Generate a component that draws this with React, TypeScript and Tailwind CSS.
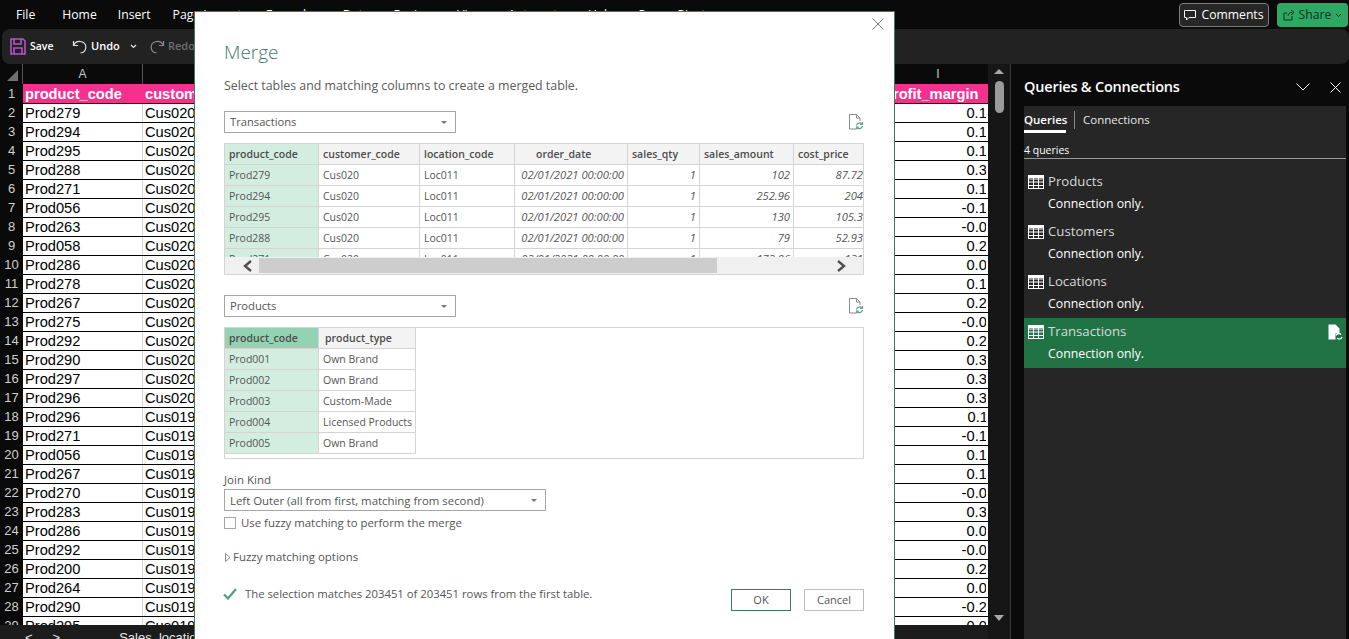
const sheetRows = [
  ["Prod279", "Cus020", "0.14"], ["Prod294", "Cus020", "0.19"], ["Prod295", "Cus020", "0.19"], ["Prod288", "Cus020", "0.33"],
  ["Prod271", "Cus020", "0.19"], ["Prod056", "Cus020", "-0.19"], ["Prod263", "Cus020", "-0.03"], ["Prod058", "Cus020", "0.24"],
  ["Prod286", "Cus020", "0.03"], ["Prod278", "Cus020", "0.17"], ["Prod267", "Cus020", "0.21"], ["Prod275", "Cus020", "-0.03"],
  ["Prod292", "Cus020", "0.24"], ["Prod290", "Cus020", "0.31"], ["Prod297", "Cus020", "0.32"], ["Prod296", "Cus020", "0.33"],
  ["Prod296", "Cus019", "0.11"], ["Prod271", "Cus019", "-0.14"], ["Prod056", "Cus019", "0.12"], ["Prod267", "Cus019", "0.13"],
  ["Prod270", "Cus019", "-0.03"], ["Prod283", "Cus019", "0.31"], ["Prod286", "Cus019", "0.03"], ["Prod292", "Cus019", "-0.03"],
  ["Prod200", "Cus019", "0.24"], ["Prod264", "Cus019", "0.03"], ["Prod290", "Cus019", "-0.24"], ["Prod295", "Cus019", "0.03"],
];

const topColumns = [
  { name: "product_code", width: "w-[94px]", head: "px-[4px]" },
  { name: "customer_code", width: "w-[101px]", head: "px-[4px]" },
  { name: "location_code", width: "w-[95px]", head: "px-[4px]" },
  { name: "order_date", width: "w-[113px]", head: "pl-[21px]" },
  { name: "sales_qty", width: "w-[72px]", head: "px-[4px]" },
  { name: "sales_amount", width: "w-[94px]", head: "px-[4px]" },
  { name: "cost_price", width: "w-[73px]", head: "px-[4px]" },
];

const topRows = [
  ["Prod279", "Cus020", "Loc011", "02/01/2021 00:00:00", "1", "102", "87.72"],
  ["Prod294", "Cus020", "Loc011", "02/01/2021 00:00:00", "1", "252.96", "204"],
  ["Prod295", "Cus020", "Loc011", "02/01/2021 00:00:00", "1", "130", "105.3"],
  ["Prod288", "Cus020", "Loc011", "02/01/2021 00:00:00", "1", "79", "52.93"],
  ["Prod271", "Cus020", "Loc011", "02/01/2021 00:00:00", "1", "172.96", "131"],
];

const productRows = [
  ["Prod001", "Own Brand"],
  ["Prod002", "Own Brand"],
  ["Prod003", "Custom-Made"],
  ["Prod004", "Licensed Products"],
  ["Prod005", "Own Brand"],
];

const queries = ["Products", "Customers", "Locations", "Transactions"];

function TableIcon() {
  return (
    <svg width="16" height="14" viewBox="0 0 16 14" fill="none" stroke="#ffffff" strokeWidth="1" className="shrink-0">
      <rect x="0.5" y="0.5" width="15" height="13" />
      <path d="M0.5 4h15M0.5 7h15M0.5 10.5h15M5.5 0.5v13M10.5 0.5v13" />
      <rect x="0.5" y="0.5" width="15" height="2" fill="#ffffff" />
    </svg>
  );
}

function RefreshFileIcon() {
  return (
    <svg width="16" height="18" viewBox="0 0 16 18" fill="none" className="shrink-0">
      <path d="M8 16H1.5V1.5H8.5L12 5V8M8.5 1.5V5H12" stroke="#8a8a8a" strokeWidth="1" />
      <path d="M8.5 12.5a3.2 3.2 0 0 1 5.6-1.5M14.5 13a3.2 3.2 0 0 1-5.6 1.5" stroke="#4f9e86" strokeWidth="1.2" />
      <path d="M14.6 9.2v2.4h-2.4M8.4 16.3v-2.4h2.4" stroke="#4f9e86" strokeWidth="1" />
    </svg>
  );
}

function SelectBox({ label, width }: { label: string; width: string }) {
  return (
    <div className={`${width} h-[22px] border border-[#a6a6a6] flex items-center justify-between pl-[5px] pr-[8px] pt-px bg-white`}>
      <span>{label}</span>
      <span className="w-0 h-0 border-l-[3px] border-r-[3px] border-t-[3px] border-l-transparent border-r-transparent border-t-[#777777]" />
    </div>
  );
}

function Cell({ width, children, className }: { width: string; children: React.ReactNode; className: string }) {
  return (
    <div className={`${width} shrink-0 h-[21px] flex items-center pt-px border-r border-b border-[#d4d4d4] overflow-hidden whitespace-nowrap ${className}`}>
      {children}
    </div>
  );
}

function ExcelTop() {
  return (
    <>
      <div className="h-[29px] shrink-0 flex items-center justify-between bg-[#0a0a0a] text-white text-[12.2px] pr-[1px]">
        <div className="flex whitespace-nowrap pt-[2px]">
          <span className="ml-[16px]">File</span>
          <span className="ml-[27px]">Home</span>
          <span className="ml-[21px]">Insert</span>
          <span className="ml-[22px]">Page Layout</span>
          <span className="ml-[24px]">Formulas</span>
          <span className="ml-[24px]">Data</span>
          <span className="ml-[24px]">Review</span>
          <span className="ml-[24px]">View</span>
          <span className="ml-[24px]">Automate</span>
          <span className="ml-[24px]">Help</span>
          <span className="ml-[24px]">Power Pivot</span>
        </div>
        <div className="flex items-center gap-[8px]">
          <div className="w-[90px] h-[24px] border border-[#7d7d7d] rounded-[4px] bg-[#262626] flex items-center justify-center gap-[5px] pt-px">
            <svg width="12" height="12" viewBox="0 0 12 12" fill="none" stroke="#ffffff" strokeWidth="1">
              <path d="M0.5 1.5h11v7h-6.5l-2.5 2.5v-2.5h-2z" />
            </svg>
            <span>Comments</span>
          </div>
          <div className="w-[71px] h-[24px] rounded-[4px] bg-[#2fa765] flex items-center justify-center gap-[4px] pt-px text-[#10331f]">
            <svg width="12" height="12" viewBox="0 0 12 12" fill="none" stroke="#10331f" strokeWidth="1">
              <path d="M9 7v4H1V4h3M5 7c0-2 1.5-3.5 4-3.5M8 1l3 2.5L8 6" />
            </svg>
            <span>Share</span>
            <svg width="7" height="5" viewBox="0 0 7 5" fill="none" stroke="#10331f" strokeWidth="1">
              <path d="M1 1l2.5 2.5L6 1" />
            </svg>
          </div>
        </div>
      </div>
      <div className="h-[35px] shrink-0 ml-[2px] bg-[#222222] rounded-[8px] flex items-center text-[10.5px] font-semibold text-white">
        <svg width="16" height="17" viewBox="0 0 16 17" fill="none" stroke="#b455c8" strokeWidth="1.6" className="ml-[8px]">
          <path d="M1 1h12l2 2v13H1z" />
          <path d="M4 1v5h7V1M4 16v-6h8v6" />
        </svg>
        <span className="ml-[4px] w-[24px]">Save</span>
        <svg width="16" height="16" viewBox="0 0 16 16" fill="none" stroke="#e0e0e0" strokeWidth="1.2" className="ml-[18px]">
          <path d="M1.5 2v4.5H6M1.5 6.5C3 3.5 5.5 2 8.5 2.5c3.5.6 5.5 3 5.3 6-.2 3-2.4 5.2-5.3 5.5" />
        </svg>
        <span className="ml-[3px] w-[30px] text-[11px]">Undo</span>
        <svg width="7" height="5" viewBox="0 0 7 5" fill="none" stroke="#e0e0e0" strokeWidth="1.2" className="ml-[9px]">
          <path d="M1 1l2.5 2.5L6 1" />
        </svg>
        <svg width="16" height="16" viewBox="0 0 16 16" fill="none" stroke="#8a8a8a" strokeWidth="1.2" className="ml-[12px]">
          <path d="M14.5 2v4.5H10M14.5 6.5C13 3.5 10.5 2 7.5 2.5c-3.5.6-5.5 3-5.3 6 .2 3 2.4 5.2 5.3 5.5" />
        </svg>
        <span className="ml-[3px] text-[11px] text-[#6e6e6e]">Redo</span>
      </div>
    </>
  );
}

function Sheet() {
  return (
    <div className="w-[988px] shrink-0 flex flex-col font-['Liberation_Sans',Arial,sans-serif]">
      <div className="h-[20px] shrink-0 flex bg-[#0a0a0a] text-[#c8c8c8] text-[12px]">
        <div className="w-[23px] border-r border-[#555555] flex items-end justify-end pr-[4px] pb-[3px]">
          <span className="w-0 h-0 border-b-[11px] border-l-[11px] border-b-[#6f6f6f] border-l-transparent" />
        </div>
        <div className="w-[120px] border-r border-[#555555] flex items-center justify-center">A</div>
        <div className="flex-1" />
        <div className="w-[100px] flex items-center justify-center">I</div>
      </div>
      <div className="h-[19px] shrink-0 flex">
        <div className="w-[23px] flex items-center justify-center bg-[#0a0a0a] text-[#d0d0d0] text-[13px]">1</div>
        <div className="flex-1 flex bg-[#f5308f] text-white font-bold text-[14.67px] leading-none items-center pt-[2px]">
          <div className="w-[120px] pl-[2px]">product_code</div>
          <div className="flex-1 pl-[2px]">customer_code</div>
          <div className="w-[100px] whitespace-nowrap">
            <span className="ml-[-4px]">profit_margin</span>
          </div>
        </div>
      </div>
      <div className="h-[522px] overflow-hidden">
        {sheetRows.map((row, index) => (
          <div key={index} className="h-[19px] flex">
            <div className="w-[23px] flex items-center justify-center bg-[#0a0a0a] text-[#d0d0d0] text-[13px]">{index + 2}</div>
            <div className="flex-1 flex bg-white border-t border-black text-black text-[14.67px] leading-none items-center">
              <div className="w-[120px] h-full pl-[2px] flex items-center border-r border-[#d4d4d4]">{row[0]}</div>
              <div className="flex-1 pl-[2px]">{row[1]}</div>
              <div className="w-[98px] mr-[2px] flex justify-end overflow-hidden">
                <span className="mr-[-9px]">{row[2]}</span>
              </div>
            </div>
          </div>
        ))}
      </div>
      <div className="h-[14px] overflow-hidden bg-[#1c1c1c] text-[#e6e6e6] text-[13px] flex pt-[6px] leading-none whitespace-nowrap">
        <span className="ml-[25px]">&lt;</span>
        <span className="ml-[20px]">&gt;</span>
        <span className="ml-[59px]">Sales_location</span>
      </div>
    </div>
  );
}

function SheetScrollbar() {
  return (
    <div className="w-[23px] shrink-0 border-r border-[#3a3a3a] bg-[#161616] flex flex-col items-center">
      <span className="mt-[5px] w-0 h-0 border-l-[5px] border-r-[5px] border-b-[5px] border-l-transparent border-r-transparent border-b-[#a8a8a8]" />
      <div className="mt-[7px] w-[9px] h-[32px] rounded-[5px] bg-[#9b9b9b]" />
      <span className="mt-[502px] w-0 h-0 border-l-[5px] border-r-[5px] border-t-[6px] border-l-transparent border-r-transparent border-t-[#a8a8a8]" />
    </div>
  );
}

function QueriesPanel() {
  return (
    <div className="flex-1 bg-[#0a0a0a] pl-[13px] pr-[3px] flex flex-col text-white">
      <div className="h-[42px] shrink-0 flex items-center justify-between pt-[4px]">
        <span className="text-[14.5px] font-semibold tracking-[-0.2px]">Queries &amp; Connections</span>
        <div className="flex items-center gap-[20px] mr-[5px]">
          <svg width="14" height="8" viewBox="0 0 14 8" fill="none" stroke="#ffffff" strokeWidth="1">
            <path d="M0.5 0.5L7 7l6.5-6.5" />
          </svg>
          <svg width="11" height="11" viewBox="0 0 11 11" fill="none" stroke="#ffffff" strokeWidth="1">
            <path d="M0.5 0.5l10 10M10.5 0.5l-10 10" />
          </svg>
        </div>
      </div>
      <div className="flex-1 bg-[#262626] flex flex-col">
        <div className="h-[27px] flex items-start text-[11.5px] pt-[5px]">
          <div className="w-[42px] h-[22px] border-b-[3px] border-white font-semibold">Queries</div>
          <div className="ml-[8px] w-px h-[18px] bg-[#8a8a8a]" />
          <div className="ml-[8px] text-[#e8e8e8]">Connections</div>
        </div>
        <div className="h-[26px] border-b border-[#9a9a9a] text-[10.5px] flex items-center pt-[10px]">4 queries</div>
        <div className="pt-[9px]">
          {queries.map((name) => {
            const active = name === "Transactions";
            return (
              <div key={name} className={`h-[50px] pl-[4px] pr-[3px] flex flex-col ${active ? "bg-[#217346]" : ""}`}>
                <div className="h-[27px] flex items-center">
                  <TableIcon />
                  <span className="ml-[4px] text-[13.2px] text-[#d8d8d8] flex-1">{name}</span>
                  {active && (
                    <svg width="15" height="16" viewBox="0 0 15 16">
                      <path d="M0.5 0.5h7l4 4v5h-4v6h-7z" fill="#ffffff" />
                      <path d="M8 11.5a3 3 0 0 1 5-1M14 13a3 3 0 0 1-5 1.2" fill="none" stroke="#ffffff" strokeWidth="1.2" />
                    </svg>
                  )}
                </div>
                <div className="ml-[20px] text-[12.3px] leading-[17px] text-white">Connection only.</div>
              </div>
            );
          })}
        </div>
      </div>
    </div>
  );
}

function MergeDialog() {
  return (
    <div className="absolute left-[194px] top-[11px] w-[701px] h-[640px] bg-white border border-[#3d7a5c] pl-[29px] pr-[30px] pt-[25px] text-[#555555] text-[10.5px] font-['Open_Sans',sans-serif]">
      <svg width="12" height="12" viewBox="0 0 12 12" fill="none" stroke="#777777" strokeWidth="1" className="absolute top-[6px] right-[10px]">
        <path d="M0.5 0.5l11 11M11.5 0.5l-11 11" />
      </svg>
      <div className="h-[30px] text-[19px] leading-[30px] font-light text-[#44786a]">Merge</div>
      <div className="mt-[10px] h-[18px] leading-[18px] text-[12.36px] text-[#5a5a5a]">Select tables and matching columns to create a merged table.</div>

      <div className="mt-[16px] flex items-center justify-between text-[11.2px]">
        <SelectBox label="Transactions" width="w-[232px]" />
        <RefreshFileIcon />
      </div>
      <div className="relative mt-[10px] h-[132px] border border-[#d4d4d4] overflow-hidden">
        <div className="flex h-[21px] font-semibold bg-[#f3f3f3] text-[#4d4d4d]">
          {topColumns.map((col, c) => (
            <Cell key={col.name} width={col.width} className={`${col.head} ${c === 0 ? "bg-[#d3eee0]" : ""}`}>
              {col.name}
            </Cell>
          ))}
        </div>
        {topRows.map((row, r) => (
          <div key={r} className="flex">
            {row.map((value, c) => (
              <Cell
                key={c}
                width={topColumns[c].width}
                className={`${c === 0 ? "bg-[#d3eee0] px-[4px]" : ""} ${c === 1 || c === 2 ? "px-[4px]" : ""} ${c >= 3 ? "text-[11.2px] italic justify-end pr-[3px]" : ""}`}
              >
                {value}
              </Cell>
            ))}
          </div>
        ))}
        <div className="absolute left-0 right-0 bottom-0 h-[17px] bg-[#f0f0f0] flex items-center">
          <svg width="11" height="12" viewBox="0 0 11 12" fill="none" stroke="#505050" strokeWidth="2.4" className="ml-[17px]">
            <path d="M9 1L3 6l6 5" />
          </svg>
          <div className="ml-[6px] w-[458px] h-[15px] bg-[#cdcdcd]" />
          <svg width="11" height="12" viewBox="0 0 11 12" fill="none" stroke="#505050" strokeWidth="2.4" className="ml-[119px]">
            <path d="M2 1l6 5-6 5" />
          </svg>
        </div>
      </div>

      <div className="mt-[20px] flex items-center justify-between text-[11.2px]">
        <SelectBox label="Products" width="w-[232px]" />
        <RefreshFileIcon />
      </div>
      <div className="mt-[10px] h-[132px] border border-[#d4d4d4]">
        <div className="flex h-[21px] font-semibold text-[#4d4d4d]">
          <Cell width="w-[94px]" className="px-[4px] bg-[#93d2b2]">product_code</Cell>
          <Cell width="w-[97px]" className="pl-[6px] bg-[#f3f3f3]">product_type</Cell>
        </div>
        {productRows.map((row) => (
          <div key={row[0]} className="flex">
            <Cell width="w-[94px]" className="px-[4px] bg-[#d3eee0]">{row[0]}</Cell>
            <Cell width="w-[97px]" className="px-[4px]">{row[1]}</Cell>
          </div>
        ))}
      </div>

      <div className="mt-[12px] h-[18px] leading-[18px] text-[11.5px]">Join Kind</div>
      <div className="text-[11.4px]">
        <SelectBox label="Left Outer (all from first, matching from second)" width="w-[322px]" />
      </div>
      <div className="mt-[3px] h-[18px] flex items-center text-[11.4px]">
        <div className="w-[12px] h-[12px] border border-[#a6a6a6]" />
        <span className="ml-[5px]">Use fuzzy matching to perform the merge</span>
      </div>
      <div className="mt-[16px] h-[18px] flex items-center text-[11.45px]">
        <svg width="6" height="9" viewBox="0 0 6 9" fill="none" stroke="#8a8a8a" strokeWidth="1" className="ml-px">
          <path d="M0.5 0.5l4.5 4-4.5 4z" />
        </svg>
        <span className="ml-[2px]">Fuzzy matching options</span>
      </div>
      <div className="mt-[19px] flex items-start justify-between text-[11.3px]">
        <div className="h-[18px] flex items-center">
          <svg width="14" height="12" viewBox="0 0 14 12" fill="none" stroke="#4f9e86" strokeWidth="2.2" className="ml-[-1px]">
            <path d="M1 6.5l4 4L13 1" />
          </svg>
          <span className="ml-[8px]">The selection matches 203451 of 203451 rows from the first table.</span>
        </div>
        <div className="mt-[4px] flex gap-[13px] text-[11px]">
          <div className="w-[60px] h-[22px] border border-[#3d7a5c] flex items-center justify-center">OK</div>
          <div className="w-[60px] h-[22px] border border-[#bdbdbd] flex items-center justify-center">Cancel</div>
        </div>
      </div>
    </div>
  );
}

export default function App() {
  return (
    <div className="relative w-[1349px] h-[639px] overflow-hidden flex flex-col bg-[#0a0a0a] font-['Open_Sans',sans-serif]">
      <ExcelTop />
      <div className="flex-1 flex min-h-0">
        <Sheet />
        <SheetScrollbar />
        <QueriesPanel />
      </div>
      <MergeDialog />
    </div>
  );
}
